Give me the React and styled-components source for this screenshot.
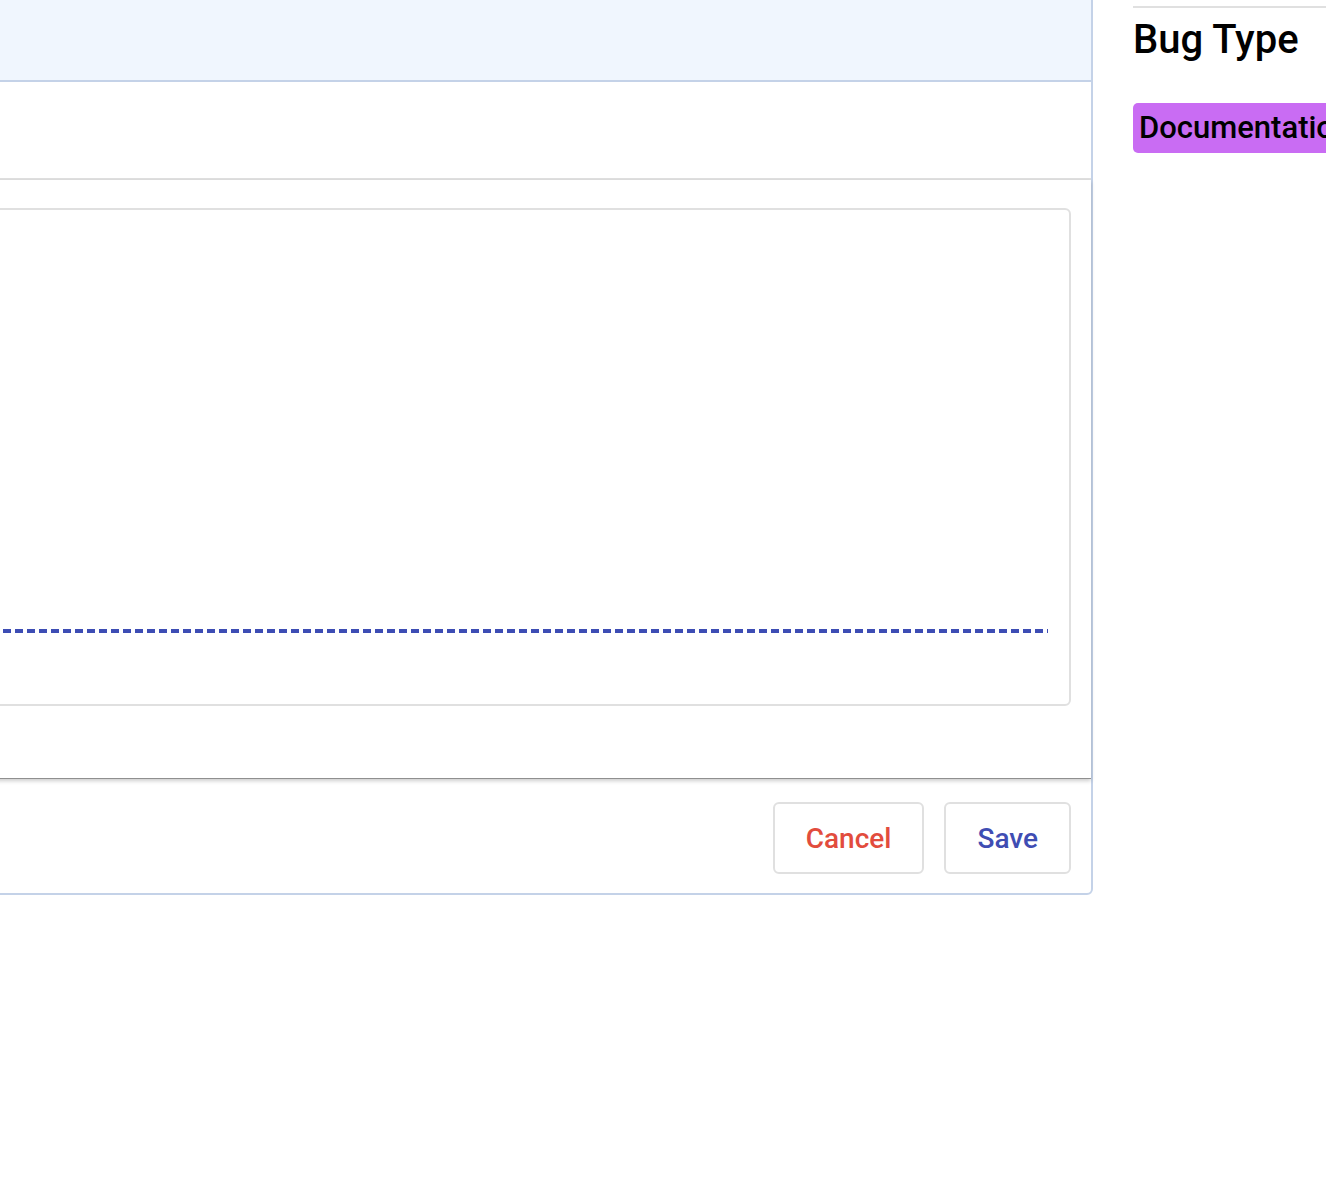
import React from "react";
import styled, { createGlobalStyle } from "styled-components";

const GlobalStyle = createGlobalStyle`
  html, body {
    margin: 0;
    padding: 0;
    overflow: hidden;
    background: #ffffff;
    font-family: Roboto, "Liberation Sans", sans-serif;
  }
`;

const Page = styled.div`
  display: flex;
  align-items: flex-start;
  gap: 40px;
  margin-left: -300px;
  width: 1800px;
`;

const Panel = styled.div`
  width: 1393px;
  margin-top: -2px;
  border: 2px solid #c4d2e8;
  border-radius: 0 0 6px 0;
  box-sizing: border-box;
  display: flex;
  flex-direction: column;
`;

const Header = styled.div`
  height: 82px;
  background: #f0f6fe;
  border-bottom: 2px solid #c4d2e8;
  box-sizing: border-box;
`;

const Toolbar = styled.div`
  height: 98px;
  border-bottom: 2px solid #e0e0e0;
  box-sizing: border-box;
`;

const Body = styled.div`
  padding: 28px 20px 72px 20px;
  border-bottom: 1px solid #8f8f8f;
  box-shadow: 0 2px 4px rgba(0, 0, 0, 0.2);
  position: relative;
`;

const Editor = styled.div`
  height: 498px;
  box-sizing: border-box;
  border: 2px solid #e0e0e0;
  border-radius: 6px;
  display: flex;
  flex-direction: column;
  justify-content: flex-end;
  padding: 0 21px 71px 21px;
`;

const DropLine = styled.div`
  height: 4px;
  background-image: linear-gradient(to right, #3d4db4 8px, transparent 8px);
  background-size: 12px 4px;
  background-repeat: repeat-x;
  background-position: 6px 0;
`;

const Footer = styled.div`
  display: flex;
  justify-content: flex-end;
  gap: 20px;
  padding: 23px 20px 19px 0;
`;

const Button = styled.button`
  height: 72px;
  padding: 0 31px;
  box-sizing: border-box;
  background: #ffffff;
  border: 2px solid #e0e0e0;
  border-radius: 6px;
  font-family: Roboto, "Liberation Sans", sans-serif;
  font-size: 28px;
  font-weight: 500;
  color: ${({ tone }) => (tone === "danger" ? "#e24c3d" : "#3f4db3")};
  cursor: pointer;
`;

const Sidebar = styled.aside`
  flex: 1;
  padding-top: 6px;
`;

const Rule = styled.div`
  height: 2px;
  background: #e0e0e0;
`;

const Title = styled.h2`
  margin: 8px 0 0 0;
  font-size: 40px;
  font-weight: 500;
  color: #000;
  line-height: normal;
`;

const Tags = styled.div`
  display: flex;
  margin-top: 40px;
`;

const Tag = styled.span`
  display: inline-block;
  height: 50px;
  line-height: 50px;
  padding: 0 6px;
  border-radius: 5px;
  background: ${({ color }) => color};
  color: #000;
  font-size: 31px;
  font-weight: 500;
  white-space: nowrap;
`;

export default function App() {
  return (
    <>
      <GlobalStyle />
      <Page>
        <Panel>
          <Header />
          <Toolbar />
          <Body>
            <Editor>
              <DropLine />
            </Editor>
          </Body>
          <Footer>
            <Button tone="danger">Cancel</Button>
            <Button tone="primary">Save</Button>
          </Footer>
        </Panel>
        <Sidebar>
          <Rule />
          <Title>Bug Type</Title>
          <Tags>
            <Tag color="#c96cf3">Documentation</Tag>
          </Tags>
        </Sidebar>
      </Page>
    </>
  );
}
